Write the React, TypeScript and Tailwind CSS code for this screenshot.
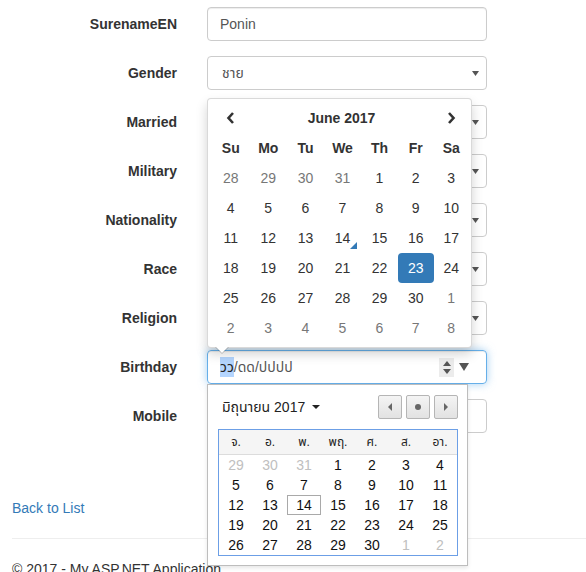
import React from 'react';

const fields = ['SurenameEN', 'Gender', 'Married', 'Military', 'Nationality', 'Race', 'Religion', 'Birthday', 'Mobile'];

const weekDays = ['Su', 'Mo', 'Tu', 'We', 'Th', 'Fr', 'Sa'];

const pickerDays: { d: number; muted?: boolean }[] = [
  ...[28, 29, 30, 31].map((d) => ({ d, muted: true })),
  ...Array.from({ length: 30 }, (_, i) => ({ d: i + 1 })),
  ...[1, 2, 3, 4, 5, 6, 7, 8].map((d) => ({ d, muted: true })),
];

const thaiDays = ['จ.', 'อ.', 'พ.', 'พฤ.', 'ศ.', 'ส.', 'อา.'];

const nativeDays: { d: number; muted?: boolean }[] = [
  ...[29, 30, 31].map((d) => ({ d, muted: true })),
  ...Array.from({ length: 30 }, (_, i) => ({ d: i + 1 })),
  ...[1, 2].map((d) => ({ d, muted: true })),
];

const SelectArrow = () => (
  <svg width="7" height="5" viewBox="0 0 7 5" className="shrink-0">
    <path d="M0 0 L7 0 L3.5 5 Z" fill="#555" />
  </svg>
);

const Chevron = ({ dir }: { dir: 'left' | 'right' }) => (
  <svg width="9" height="12" viewBox="0 0 9 12">
    <path
      d={dir === 'left' ? 'M7 1 L2.5 6 L7 11' : 'M2 1 L6.5 6 L2 11'}
      stroke="#333"
      strokeWidth="2.6"
      fill="none"
    />
  </svg>
);

function FieldControl({ name }: { name: string }) {
  if (name === 'SurenameEN') {
    return (
      <div className="flex h-[34px] w-[280px] items-center rounded-[4px] border border-[#ccc] px-[12px] text-[#555] shadow-[inset_0_1px_1px_rgba(0,0,0,0.075)]">
        Ponin
      </div>
    );
  }
  if (name === 'Mobile') {
    return <div className="h-[34px] w-[280px] rounded-[4px] border border-[#ccc]" />;
  }
  if (name === 'Birthday') {
    return (
      <div className="flex h-[34px] w-[280px] items-center rounded-[4px] border border-[#66afe9] pl-[12px] pr-[17px] text-[#555] shadow-[inset_0_1px_1px_rgba(0,0,0,0.075),0_0_8px_rgba(102,175,233,0.6)]">
        <span className="bg-[#b4d5fe] text-[#222]">วว</span>
        <span>/ดด/ปปปป</span>
        <div className="ml-auto flex h-[19px] w-[15px] flex-col items-center justify-center gap-[3px] bg-[#ececec]">
          <svg width="8" height="5" viewBox="0 0 8 5">
            <path d="M0 5 L4 0 L8 5 Z" fill="#555" />
          </svg>
          <svg width="8" height="5" viewBox="0 0 8 5">
            <path d="M0 0 L8 0 L4 5 Z" fill="#555" />
          </svg>
        </div>
        <svg width="10" height="8" viewBox="0 0 10 8" className="ml-[5px]">
          <path d="M0 0 L10 0 L5 8 Z" fill="#555" />
        </svg>
      </div>
    );
  }
  return (
    <div className="flex h-[34px] w-[280px] items-center rounded-[4px] border border-[#ccc] pl-[14px] pr-[7px] text-[#555]">
      <span>{name === 'Gender' ? 'ชาย' : ''}</span>
      <span className="ml-auto">
        <SelectArrow />
      </span>
    </div>
  );
}

function DatePicker() {
  return (
    <div className="absolute left-[207px] top-[98px] w-[265px] rounded-[4px] border border-black/15 bg-white p-[4px] shadow-[0_6px_12px_rgba(0,0,0,0.175)]">
      <div className="grid grid-cols-[37.5px_37.5px_37px_37px_37px_35.5px_35.5px] text-[14px] text-[#333]">
        <div className="flex h-[30px] items-center justify-center">
          <Chevron dir="left" />
        </div>
        <div className="col-span-5 flex h-[30px] items-center justify-center font-bold">June 2017</div>
        <div className="flex h-[30px] items-center justify-center">
          <Chevron dir="right" />
        </div>
        {weekDays.map((w) => (
          <div key={w} className="flex h-[30px] items-center justify-center font-bold">
            {w}
          </div>
        ))}
        {pickerDays.map((c, i) => {
          const selected = !c.muted && c.d === 23;
          const today = !c.muted && c.d === 14;
          return (
            <div
              key={i}
              className={`relative flex h-[30px] items-center justify-center rounded-[4px] ${
                selected ? 'bg-[#337ab7] text-white' : c.muted ? 'text-[#777]' : 'text-[#333]'
              }`}
            >
              {c.d}
              {today && (
                <span className="absolute bottom-[4px] right-[4px] h-0 w-0 border-b-[7px] border-l-[7px] border-b-[#337ab7] border-l-transparent" />
              )}
            </div>
          );
        })}
      </div>
      <span className="absolute left-[7px] top-full h-0 w-0 border-l-[7px] border-r-[7px] border-t-[7px] border-l-transparent border-r-transparent border-t-black/20" />
      <span className="absolute left-[8px] top-full h-0 w-0 border-l-[6px] border-r-[6px] border-t-[6px] border-l-transparent border-r-transparent border-t-white" />
    </div>
  );
}

function NativeCalendar() {
  return (
    <div className="absolute left-[207px] top-[384px] h-[182px] w-[261px] border border-[#bdbdbd] bg-white shadow-[0_2px_4px_rgba(0,0,0,0.1)] font-['Liberation_Sans','Noto_Sans_Thai','DejaVu_Sans',sans-serif]">
      <div className="ml-[14px] mr-[9px] mt-[10px] flex h-[24px] items-center">
        <span className="text-[14px] text-[#222]">มิถุนายน 2017</span>
        <svg width="8" height="4" viewBox="0 0 8 4" className="ml-[7px]">
          <path d="M0 0 L8 0 L4 4 Z" fill="#222" />
        </svg>
        <div className="ml-auto flex gap-[4px]">
          {['prev', 'today', 'next'].map((b) => (
            <div
              key={b}
              className="flex h-[24px] w-[24px] items-center justify-center rounded-[2px] border border-[#b5b5b5] bg-gradient-to-b from-[#f4f4f4] to-[#e2e2e2]"
            >
              {b === 'prev' && (
                <svg width="4" height="8" viewBox="0 0 4 8">
                  <path d="M4 0 L4 8 L0 4 Z" fill="#666" />
                </svg>
              )}
              {b === 'today' && <span className="h-[6px] w-[6px] rounded-full bg-[#666]" />}
              {b === 'next' && (
                <svg width="4" height="8" viewBox="0 0 4 8">
                  <path d="M0 0 L0 8 L4 4 Z" fill="#666" />
                </svg>
              )}
            </div>
          ))}
        </div>
      </div>
      <div className="ml-[10px] mt-[10px] w-[240px] border border-[#6c9fe6]">
        <div className="grid h-[25px] grid-cols-7 border-b border-[#dcdcdc] bg-[#f5f5f5] text-[12px] text-[#222]">
          {thaiDays.map((t) => (
            <div key={t} className="flex items-center justify-center">
              {t}
            </div>
          ))}
        </div>
        <div className="grid grid-cols-7 text-[14px]">
          {nativeDays.map((c, i) => {
            const today = !c.muted && c.d === 14;
            return (
              <div
                key={i}
                className={`flex h-[20px] items-center justify-center ${
                  c.muted ? 'text-[#c0c0c0]' : 'text-[#111]'
                } ${today ? 'border border-[#a9a9a9]' : ''}`}
              >
                {c.d}
              </div>
            );
          })}
        </div>
      </div>
    </div>
  );
}

export default function App() {
  return (
    <div className="relative h-[572px] w-[586px] overflow-hidden bg-white font-['Liberation_Sans','Noto_Sans_Thai','DejaVu_Sans',Arial,sans-serif] text-[14px] leading-[20px] text-[#333]">
      <div className="pl-[12px] pt-[7px]">
        {fields.map((f) => (
          <div key={f} className="mb-[15px] flex h-[34px] items-center">
            <label className="w-[165px] text-right font-bold">{f}</label>
            <div className="ml-[30px]">
              <FieldControl name={f} />
            </div>
          </div>
        ))}
        <div className="mt-[65px]">
          <a className="text-[#337ab7]">Back to List</a>
        </div>
        <hr className="mt-[20px] border-t border-[#eee]" />
        <footer>
          <p className="mt-[20px]">© 2017 - My ASP.NET Application</p>
        </footer>
      </div>
      <DatePicker />
      <NativeCalendar />
    </div>
  );
}
